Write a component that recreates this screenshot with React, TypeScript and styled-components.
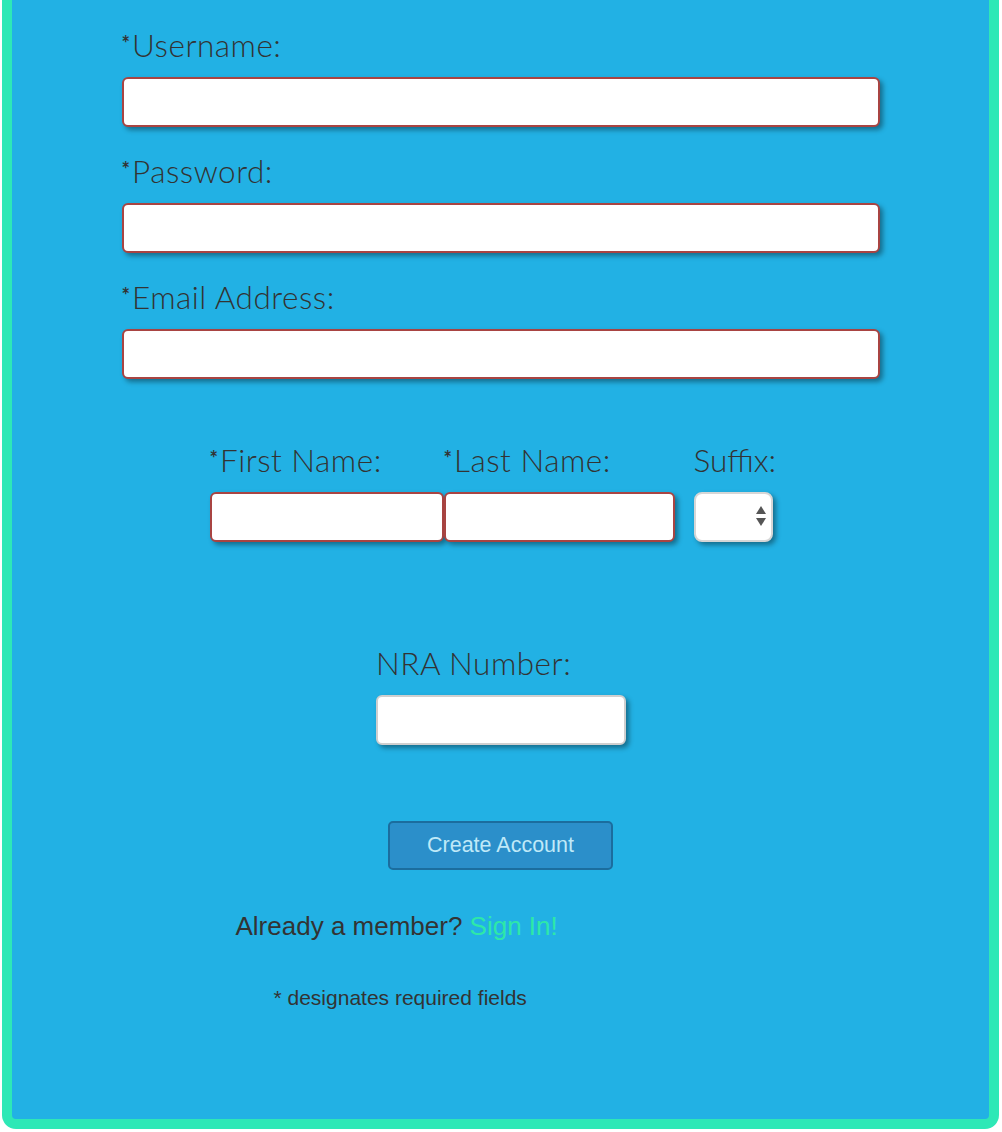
import React from "react";
import styled, { createGlobalStyle } from "styled-components";

const Global = createGlobalStyle`
  html, body { margin: 0; padding: 0; background: #ffffff; }
  body { font-family: "Lato", "Open Sans", sans-serif; }
  * { box-sizing: border-box; }
`;

const Frame = styled.div`
  margin: 0 3px 3px 2px;
  height: 1129px;
  border: 10px solid #2ee8b6;
  border-top: none;
  border-radius: 0 0 14px 14px;
  background: #22b1e4;
  padding-top: 25px;
`;

const Form = styled.form`
  width: 758px;
  margin: 0 auto;
  display: flex;
  flex-direction: column;
  color: #333333;
`;

const Group = styled.div<{ $top?: number }>`
  display: flex;
  flex-direction: column;
  margin-top: ${(p) => p.$top ?? 0}px;
`;

const Label = styled.label`
  font-family: "Lato", "Open Sans", sans-serif;
  font-weight: 300;
  font-size: 31.5px;
  line-height: 40px;
  height: 40px;
  margin-bottom: 12px;
  color: #333333;
  white-space: nowrap;
  letter-spacing: 0.5px;
`;

const Star = styled.span`
  font-size: 20px;
  font-weight: 700;
  vertical-align: top;
  position: relative;
  top: -2px;
  margin-right: 2px;
  letter-spacing: 0;
`;

const TextInput = styled.input<{ $required?: boolean }>`
  width: 100%;
  height: 50px;
  border: 2px solid ${(p) => (p.$required ? "#a94442" : "#cfcfcf")};
  border-radius: 6px;
  background: #ffffff;
  box-shadow: 3px 3px 5px rgba(0, 0, 0, 0.38);
  outline: none;
  padding: 6px 12px;
  font-size: 18px;
`;

const NameRow = styled.div`
  display: flex;
  margin-top: 61px;
  margin-left: 88px;
`;

const Col = styled.div<{ $w: number; $gap?: number }>`
  width: ${(p) => p.$w}px;
  margin-right: ${(p) => p.$gap ?? 0}px;
  display: flex;
  flex-direction: column;
`;

const SuffixLabel = styled(Label)`
  letter-spacing: 0;
`;

const SelectWrap = styled.div`
  position: relative;
  width: 79px;
  height: 50px;
`;

const Select = styled.select`
  appearance: none;
  -webkit-appearance: none;
  width: 100%;
  height: 100%;
  border: 2px solid #d6d6d6;
  border-radius: 8px;
  background: #ffffff;
  box-shadow: 3px 3px 5px rgba(0, 0, 0, 0.38);
  outline: none;
`;

const Arrows = styled.svg`
  position: absolute;
  right: 6px;
  top: 13px;
  pointer-events: none;
`;

const Center = styled.div<{ $top: number }>`
  display: flex;
  flex-direction: column;
  align-items: center;
  margin-top: ${(p) => p.$top}px;
`;

const NraGroup = styled.div`
  width: 250px;
  display: flex;
  flex-direction: column;
  margin-left: 1px;
`;

const Button = styled.button`
  width: 225px;
  height: 49px;
  background: #2b8fca;
  border: 2px solid #1b6d9e;
  border-radius: 5px;
  color: #bfe9f8;
  font-family: "Liberation Sans", Arial, sans-serif;
  font-size: 21.5px;
  cursor: pointer;
  padding: 0;
`;

const Member = styled.p`
  margin: 41px 0 0 114px;
  font-family: "Liberation Sans", Arial, sans-serif;
  font-size: 26px;
  line-height: 30px;
  color: #333333;
`;

const SignIn = styled.a`
  color: #2ee8a8;
  text-decoration: none;
`;

const Note = styled.p`
  margin: 45px 0 0 152px;
  font-family: "Liberation Sans", Arial, sans-serif;
  font-size: 21px;
  line-height: 24px;
  color: #333333;
`;

const ReqLabel: React.FC<{ text: string }> = ({ text }) => (
  <Label>
    <Star>*</Star>
    {text}
  </Label>
);

export default function App() {
  return (
    <>
      <Global />
      <Frame>
        <Form onSubmit={(e) => e.preventDefault()}>
          <Group>
            <ReqLabel text="Username:" />
            <TextInput $required type="text" />
          </Group>
          <Group $top={24}>
            <ReqLabel text="Password:" />
            <TextInput $required type="password" />
          </Group>
          <Group $top={24}>
            <ReqLabel text="Email Address:" />
            <TextInput $required type="email" />
          </Group>

          <NameRow>
            <Col $w={234}>
              <ReqLabel text="First Name:" />
              <TextInput $required type="text" />
            </Col>
            <Col $w={231} $gap={19}>
              <ReqLabel text="Last Name:" />
              <TextInput $required type="text" />
            </Col>
            <Col $w={79}>
              <SuffixLabel>Suffix:</SuffixLabel>
              <SelectWrap>
                <Select defaultValue="">
                  <option value=""></option>
                  <option value="Jr.">Jr.</option>
                  <option value="Sr.">Sr.</option>
                  <option value="II">II</option>
                  <option value="III">III</option>
                </Select>
                <Arrows width="12" height="22" viewBox="0 0 12 22">
                  <path d="M6 1 L11 9 L1 9 Z" fill="#555" />
                  <path d="M1 13 L11 13 L6 21 Z" fill="#555" />
                </Arrows>
              </SelectWrap>
            </Col>
          </NameRow>

          <Center $top={101}>
            <NraGroup>
              <Label>NRA Number:</Label>
              <TextInput type="text" />
            </NraGroup>
          </Center>

          <Center $top={76}>
            <Button type="submit">Create Account</Button>
          </Center>

          <Member>
            Already a member? <SignIn href="#">Sign In!</SignIn>
          </Member>
          <Note>* designates required fields</Note>
        </Form>
      </Frame>
    </>
  );
}
